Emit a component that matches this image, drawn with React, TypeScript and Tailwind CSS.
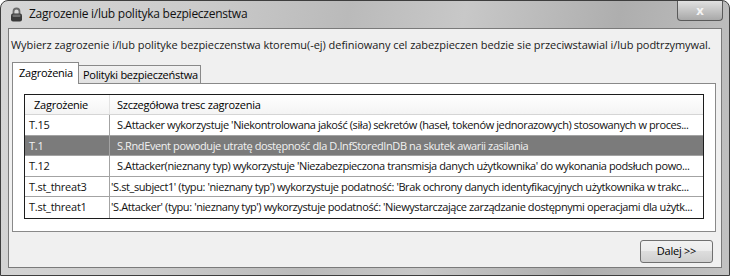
import React from "react";

const rows = [
  { id: "T.15", text: "S.Attacker wykorzystuje 'Niekontrolowana jakość (siła) sekretów (haseł, tokenów jednorazowych) stosowanych w proces...", indent: true },
  { id: "T.1", text: "S.RndEvent powoduje utratę dostępność dla D.InfStoredInDB na skutek awarii zasilania", indent: true, selected: true },
  { id: "T.12", text: "S.Attacker(nieznany typ) wykorzystuje 'Niezabezpieczona transmisja danych użytkownika' do wykonania podsłuch powo...", indent: true },
  { id: "T.st_threat3", text: "'S.st_subject1' (typu: 'nieznany typ') wykorzystuje podatność: 'Brak ochrony danych identyfikacyjnych użytkownika w trakc..." },
  { id: "T.st_threat1", text: "'S.Attacker' (typu: 'nieznany typ') wykorzystuje podatność: 'Niewystarczające zarządzanie dostępnymi operacjami dla użytk..." },
];

function Lock() {
  return (
    <svg width="13" height="15" viewBox="0 0 13 15">
      <path d="M3.5 7 V4.5 a3 3 0 0 1 6 0 V7" fill="none" stroke="#6a6a6a" strokeWidth="1.8" />
      <rect x="1" y="6.5" width="11" height="8" rx="2" fill="#3a3a3a" />
      <rect x="2.5" y="7.5" width="8" height="2.5" rx="1" fill="#6e6e6e" />
    </svg>
  );
}

export default function App() {
  return (
    <div
      className="w-[730px] h-[276px] flex flex-col rounded-t-[8px] border border-[#3e3e3e] bg-[linear-gradient(100deg,#d6d6d6_0%,#cbcbcb_25%,#bababa_45%,#c8c8c8_60%,#aeaeae_80%,#c2c2c2_100%)] text-[11px] tracking-[-0.25px] text-black"
      style={{ fontFamily: '"Open Sans", "Noto Sans", sans-serif' }}
    >
      <div className="h-[27px] flex items-start">
        <div className="flex items-center h-[26px] pl-[9px]">
          <Lock />
          <span className="ml-[6px] text-[12px] text-[#111]">Zagrozenie i/lub polityka bezpieczenstwa</span>
        </div>
        <div className="ml-auto mr-[6px] w-[46px] h-[20px] rounded-b-[4px] border border-t-0 border-[#5a5a5a] bg-[linear-gradient(#e0e0e0,#a8a8a8)] flex items-center justify-center text-[#f4f4f4] text-[13px] font-bold leading-none">
          x
        </div>
      </div>
      <div className="mx-[7px] h-[240px] border border-[#7a7a7a] bg-[#f0f0f0] flex flex-col">
        <div className="pt-[8px] pl-[2px] h-[24px] leading-[16px] tracking-[-0.05px] whitespace-nowrap text-[#1a1a1a]">
          Wybierz zagrozenie i/lub polityke bezpieczenstwa ktoremu(-ej) definiowany cel zabezpieczen bedzie sie przeciwstawial i/lub podtrzymywal.
        </div>
        <div className="mt-[9px] ml-[3px] flex items-end h-[21px] relative z-10">
          <div className="w-[67px] h-[22px] border border-b-0 border-[#898989] bg-white pl-[6px] leading-[19px] whitespace-nowrap -mb-px">
            Zagrożenia
          </div>
          <div className="w-[122px] h-[18px] border border-l-0 border-b-0 border-[#898989] bg-[linear-gradient(#f2f2f2,#e1e1e1)] pl-[4px] leading-[17px] whitespace-nowrap">
            Polityki bezpieczeństwa
          </div>
        </div>
        <div className="ml-[3px] w-[704px] h-[149px] border border-[#898989] bg-white pt-[10px] pl-[11px]">
          <div className="w-[680px] border border-[#1c1c1c] bg-white">
            <div className="flex h-[20px] border-b border-[#d5d5d5] bg-[linear-gradient(#ffffff,#f4f4f4)] leading-[19px]">
              <div className="w-[85px] pl-[9px] border-r border-[#e3e3e3]">Zagrożenie</div>
              <div className="pl-[7px]">Szczegółowa tresc zagrozenia</div>
            </div>
            {rows.map((r) => (
              <div
                key={r.id}
                className={
                  "flex h-[20.5px] border-b last:border-b-0 border-[#a3a3a3] leading-[19px] whitespace-nowrap overflow-hidden " +
                  (r.selected ? "bg-[#7b7b7b] text-[#f2f2f2]" : "text-[#111]")
                }
              >
                <div className="w-[85px] shrink-0 pl-[4px] border-r border-[#a3a3a3]">{r.id}</div>
                <div className={(r.indent ? "pl-[7px]" : "pl-[1px]") + " tracking-[-0.4px]"}>{r.text}</div>
              </div>
            ))}
          </div>
        </div>
        <div className="flex justify-end mt-[8px] mr-[8px]">
          <div className="w-[73px] h-[23px] rounded-[3px] border border-[#707070] bg-[linear-gradient(#f2f2f2_0%,#ebebeb_50%,#dddddd_50%,#cfcfcf_100%)] flex items-center justify-center">
            Dalej &gt;&gt;
          </div>
        </div>
      </div>
    </div>
  );
}
